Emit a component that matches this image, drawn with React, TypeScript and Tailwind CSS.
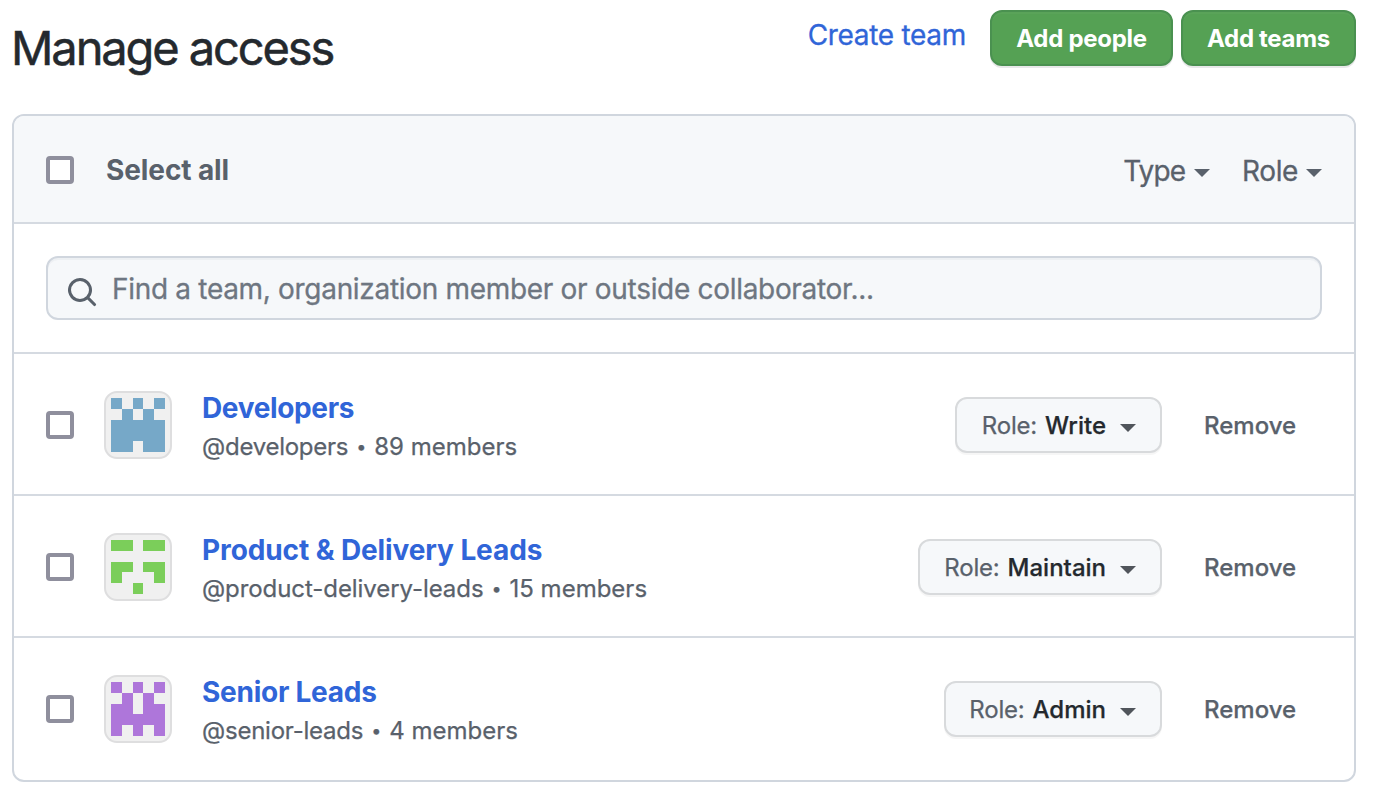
import React from "react";

type Team = {
  name: string;
  handle: string;
  members: string;
  role: string;
  color: string;
  cells: string[];
  nameClass: string;
  handleClass: string;
  buttonClass: string;
};

const teams: Team[] = [
  {
    name: "Developers",
    handle: "@developers",
    members: "89 members",
    role: "Write",
    color: "#76a8c8",
    cells: ["#.#.#", ".#.#.", "#####", "#####", "##.##"],
    nameClass: "tracking-[-0.35px]",
    handleClass: "tracking-[-0.25px]",
    buttonClass: "w-[207px]",
  },
  {
    name: "Product & Delivery Leads",
    handle: "@product-delivery-leads",
    members: "15 members",
    role: "Maintain",
    color: "#7bce5a",
    cells: ["##.##", ".....", "##.##", "#...#", "..#.."],
    nameClass: "tracking-[-0.1px]",
    handleClass: "tracking-[-0.07px]",
    buttonClass: "w-[244px]",
  },
  {
    name: "Senior Leads",
    handle: "@senior-leads",
    members: "4 members",
    role: "Admin",
    color: "#ae76da",
    cells: ["#.#.#", ".#.#.", "##.##", "#####", "#.#.#"],
    nameClass: "tracking-[-0.25px]",
    handleClass: "tracking-[-0.23px]",
    buttonClass: "w-[218px]",
  },
];

function Checkbox() {
  return <span role="checkbox" aria-checked="false" className="block size-7 shrink-0 rounded-[4px] border-4 border-[#8f8f9d] bg-white" />;
}

function Caret({ className }: { className: string }) {
  return (
    <svg viewBox="0 0 16 8" className={`h-2 w-4 shrink-0 ${className}`} fill="currentColor" aria-hidden="true">
      <path d="M0 0h16L8 8z" />
    </svg>
  );
}

function Identicon({ cells, color }: { cells: string[]; color: string }) {
  return (
    <svg viewBox="0 0 68 68" className="size-[68px] shrink-0" aria-hidden="true">
      <rect x="1" y="1" width="66" height="66" rx="12" fill="#f0f0f0" stroke="#dededf" strokeWidth="2" />
      <g fill={color} shapeRendering="crispEdges">
        {cells.flatMap((row, y) =>
          [...row].map((c, x) =>
            c === "#" ? <rect key={`${x}-${y}`} x={7 + x * 10.8} y={7 + y * 10.8} width="10.8" height="10.8" /> : null,
          ),
        )}
      </g>
    </svg>
  );
}

function TeamRow({ team }: { team: Team }) {
  return (
    <li className="flex h-[142px] items-center border-t-2 border-[#d5dae1] pt-0.5 pl-8">
      <Checkbox />
      <div className="ml-[30px]">
        <Identicon cells={team.cells} color={team.color} />
      </div>
      <div className="ml-[30px] flex flex-1 flex-col pt-0.5 whitespace-nowrap">
        <a className={`text-[28px] leading-[42px] font-bold text-[#3065d8] ${team.nameClass}`}>{team.name}</a>
        <div className="-mt-px flex text-[24px] leading-[37px] text-[#59616b] [-webkit-text-stroke:0.25px]">
          <span className={team.handleClass}>{team.handle}</span>
          <span className="w-[26px] text-center text-[18px] leading-[37px]">•</span>
          <span>{team.members}</span>
        </div>
      </div>
      <button
        className={`flex h-14 items-center justify-end rounded-xl border-2 border-[#d8dadc] bg-[#f6f8fa] pr-6 text-[24px] whitespace-nowrap text-[#24292e] shadow-[0_2px_0_rgba(27,31,35,0.04)] ${team.buttonClass}`}
      >
        <span className="pt-0.5 tracking-[-0.2px] text-[#59616b] [-webkit-text-stroke:0.25px]">Role:</span>
        <span className="ml-2 pt-0.5 font-medium [-webkit-text-stroke:0.25px]">{team.role}</span>
        <Caret className="mt-1.5 ml-[14px] text-[#50555b]" />
      </button>
      <button className="mr-[58px] ml-[42px] w-[92px] pt-0.5 text-[24px] font-medium whitespace-nowrap text-[#59616b] [-webkit-text-stroke:0.25px]">
        Remove
      </button>
    </li>
  );
}

export default function App() {
  return (
    <main className="h-[794px] w-[1376px] overflow-hidden bg-white pr-5 pl-3 font-['Inter',sans-serif]">
      <header className="flex h-[114px] items-start">
        <h1 className="mt-3 -ml-px flex-1 text-[47px] leading-[72px] tracking-[-2.1px] whitespace-nowrap text-[#24292e] [-webkit-text-stroke:0.5px]">
          Manage access
        </h1>
        <a className="mt-[14px] mr-6 text-[28px] leading-[42px] tracking-[-0.3px] whitespace-nowrap text-[#3065d8] [-webkit-text-stroke:0.3px]">
          Create team
        </a>
        <div className="mt-[10px] flex gap-2">
          <button className="h-14 w-[183px] rounded-xl border-2 border-[#4a9150] bg-[#55a154] pt-0.5 text-[24px] font-bold tracking-[-0.3px] whitespace-nowrap text-white shadow-[0_2px_0_rgba(27,31,35,0.1),inset_0_2px_0_rgba(255,255,255,0.03)]">
            Add people
          </button>
          <button className="h-14 w-[175px] rounded-xl border-2 border-[#4a9150] bg-[#55a154] pt-0.5 text-[24px] font-bold tracking-[-0.3px] whitespace-nowrap text-white shadow-[0_2px_0_rgba(27,31,35,0.1),inset_0_2px_0_rgba(255,255,255,0.03)]">
            Add teams
          </button>
        </div>
      </header>

      <section className="h-[668px] overflow-hidden rounded-xl border-2 border-[#d0d6de] bg-white">
        <div className="flex h-[108px] items-center border-b-2 border-[#d5dae1] bg-[#f6f8fa] px-8 pt-0.5 text-[28px] whitespace-nowrap text-[#59616b]">
          <Checkbox />
          <span className="ml-8 flex-1 font-bold tracking-[-0.1px]">Select all</span>
          <span className="flex items-center pt-0.5 tracking-[-0.9px] [-webkit-text-stroke:0.3px]">
            Type
            <Caret className="mt-1 ml-[9px]" />
          </span>
          <span className="ml-8 flex items-center pt-0.5 tracking-[-0.4px] [-webkit-text-stroke:0.3px]">
            Role
            <Caret className="mt-1 ml-2" />
          </span>
        </div>

        <div className="h-32 p-8">
          <div className="flex h-16 items-center rounded-xl border-2 border-[#d0d6de] bg-[#f6f8fa] pl-[18px] shadow-[inset_0_2px_0_rgba(225,228,232,0.4)]">
            <svg viewBox="0 0 16 16" className="mt-2 size-8 shrink-0" fill="#59616b" aria-hidden="true">
              <path
                fillRule="evenodd"
                d="M11.5 7a4.499 4.499 0 11-8.998 0A4.499 4.499 0 0111.5 7zm-.82 4.74a6 6 0 111.06-1.06l3.04 3.04a.75.75 0 11-1.06 1.06l-3.04-3.04z"
              />
            </svg>
            <span className="ml-[14px] pt-0.5 text-[28px] tracking-[-0.31px] whitespace-nowrap text-[#6e7681] [-webkit-text-stroke:0.3px]">
              Find a team, organization member or outside collaborator...
            </span>
          </div>
        </div>

        <ul>
          {teams.map((team) => (
            <TeamRow key={team.name} team={team} />
          ))}
        </ul>
      </section>
    </main>
  );
}
